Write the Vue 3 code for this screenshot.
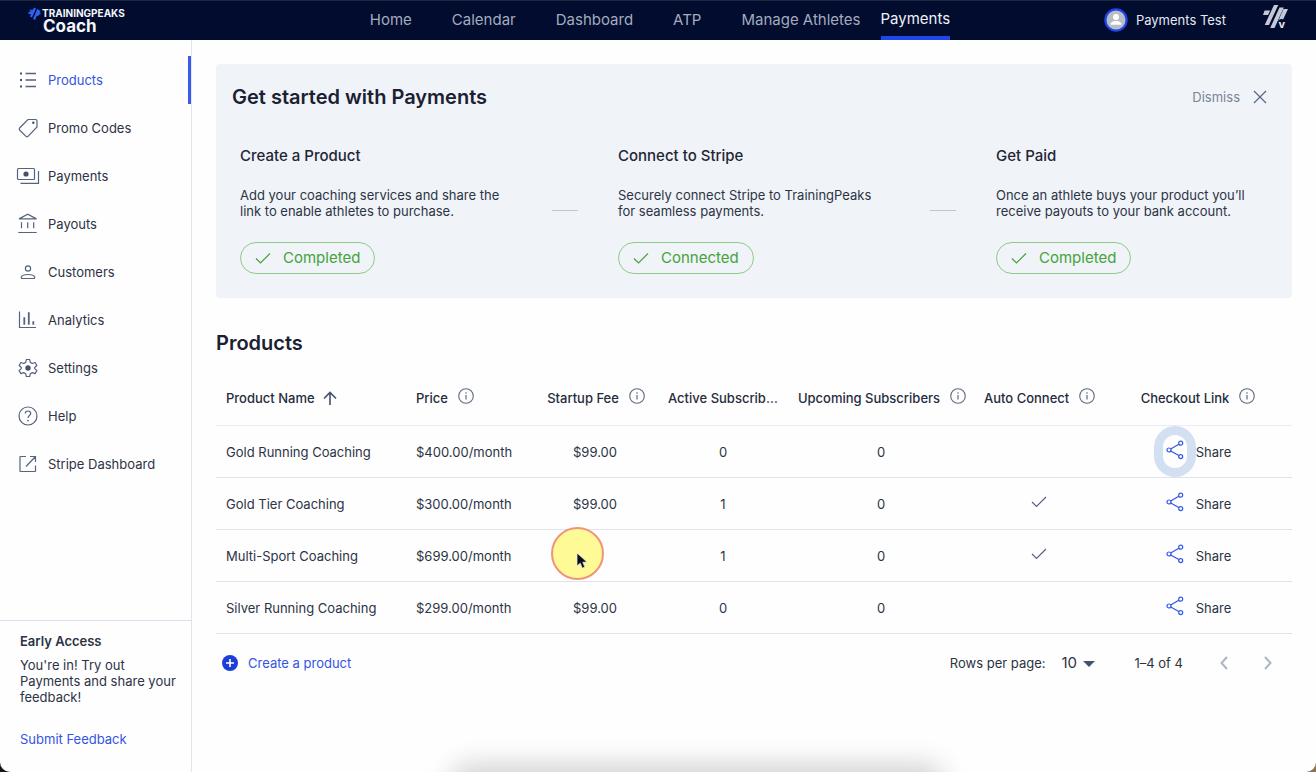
<script setup>
import { ref } from 'vue'

const tabs = ['Home', 'Calendar', 'Dashboard', 'ATP', 'Manage Athletes', 'Payments']
const menu = [
  { id: 'products', label: 'Products' },
  { id: 'promo', label: 'Promo Codes' },
  { id: 'payments', label: 'Payments' },
  { id: 'payouts', label: 'Payouts' },
  { id: 'customers', label: 'Customers' },
  { id: 'analytics', label: 'Analytics' },
  { id: 'settings', label: 'Settings' },
  { id: 'help', label: 'Help' },
  { id: 'stripe', label: 'Stripe Dashboard' },
]
const steps = [
  { title: 'Create a Product', text: 'Add your coaching services and share the link to enable athletes to purchase.', state: 'Completed' },
  { title: 'Connect to Stripe', text: 'Securely connect Stripe to TrainingPeaks for seamless payments.', state: 'Connected' },
  { title: 'Get Paid', text: 'Once an athlete buys your product you’ll receive payouts to your bank account.', state: 'Completed' },
]
const columns = [
  { key: 'name', label: 'Product Name', sort: true },
  { key: 'price', label: 'Price', info: true },
  { key: 'fee', label: 'Startup Fee', info: true },
  { key: 'active', label: 'Active Subscribers' },
  { key: 'upcoming', label: 'Upcoming Subscribers', info: true },
  { key: 'auto', label: 'Auto Connect', info: true },
  { key: 'link', label: 'Checkout Link', info: true },
]
const products = [
  { name: 'Gold Running Coaching', price: '$400.00/month', fee: '$99.00', active: 0, upcoming: 0, auto: false, focused: true },
  { name: 'Gold Tier Coaching', price: '$300.00/month', fee: '$99.00', active: 1, upcoming: 0, auto: true },
  { name: 'Multi-Sport Coaching', price: '$699.00/month', fee: '', active: 1, upcoming: 0, auto: true, pointer: true },
  { name: 'Silver Running Coaching', price: '$299.00/month', fee: '$99.00', active: 0, upcoming: 0, auto: false },
]
const perPage = ref(10)
</script>

<template>
  <div class="window">
    <header class="topbar">
      <a href="#" class="brand">
        <svg class="brand-mark" width="13" height="13" viewBox="0 0 26 26" aria-hidden="true">
          <g stroke="#2f62f0" fill="none">
            <path d="M6 20L14 2M12 25L20.500 5M18.500 17.500L23 7" stroke-width="4.400" />
            <path d="M1 12H9M3.500 7.500H12M17 13H25" stroke-width="3.600" />
          </g>
        </svg>
        <span class="brand-text">
          <span class="brand-name">TRAININGPEAKS</span>
          <span class="brand-sub">Coach</span>
        </span>
      </a>
      <nav class="tabs" aria-label="Main">
        <a v-for="t in tabs" :key="t" href="#" class="tab" :class="{ active: t === 'Payments' }">{{ t }}</a>
      </nav>
      <div class="account">
        <button class="user" type="button">
          <svg width="24" height="24" viewBox="0 0 24 24" aria-hidden="true">
            <circle cx="12" cy="12" r="10.6" fill="#b9bdc4" stroke="#1f45ec" stroke-width="2.2" />
            <circle cx="12" cy="9" r="3" fill="#fff" />
            <path d="M6.5 16.8c0-2.6 2.4-3.8 5.5-3.8s5.500 1.200 5.500 3.800z" fill="#fff" />
          </svg>
          Payments Test
        </button>
        <a href="#" class="virtual" aria-label="Virtual">
          <svg width="26" height="27" viewBox="0 0 26 27" aria-hidden="true">
            <g fill="#c3cad6">
              <path d="M2.600 7.500H8.200L6 12H1zM12 2H16.300L7 22H2.700zM17.500 4.500H21.800L12.500 25H8.200zM21.500 6H26L20.200 18.500H16z" />
            </g>
          </svg>
          <span class="virtual-v">v</span>
        </a>
      </div>
    </header>

    <div class="body">
      <aside class="sidebar">
        <nav class="menu" aria-label="Payments">
          <a v-for="m in menu" :key="m.id" href="#" class="menu-item" :class="{ current: m.id === 'products' }">
            <svg class="menu-icon" width="24" height="24" viewBox="0 0 24 24" aria-hidden="true">
              <template v-if="m.id === 'products'">
                <path d="M9.500 5.500H20M9.500 12H20M9.500 18.500H20" stroke-width="1.500" />
                <path class="solid" d="M4 4.500h2v2H4zM4 11h2v2H4zM4 17.500h2v2H4z" />
              </template>
              <template v-else-if="m.id === 'promo'">
                <path d="M12 3.500H19.500Q21 3.500 21 5V11L12 20.300Q11 21.300 10 20.300L3.600 14Q2.800 13 3.600 12z" />
                <circle class="solid" cx="17.300" cy="6.800" r="1.200" />
              </template>
              <template v-else-if="m.id === 'payments'">
                <rect x="1.500" y="4.500" width="17" height="11" rx="1" />
                <circle class="solid" cx="10" cy="10" r="2.600" />
                <path d="M22.500 7V19.300H4.500" />
              </template>
              <template v-else-if="m.id === 'payouts'">
                <path d="M3 6.900H20.500L11.700 2.300zM5.500 10.300v6M11.700 10.300v6M17.700 10.300v6M2.300 20.500H20.700" />
              </template>
              <template v-else-if="m.id === 'customers'">
                <circle cx="12" cy="8.500" r="2.600" />
                <path d="M6.500 18.500h11Q19 18.500 18.700 17C18 15 14.500 14.500 12 14.500S6 15 5.300 17Q5 18.500 6.500 18.500z" />
              </template>
              <template v-else-if="m.id === 'analytics'">
                <path d="M3.500 3.500V19.500H20" />
                <path class="bold" d="M8.300 9.300v7.400M12.800 4.300v12.400M17.300 13.300v3.400" />
              </template>
              <template v-else-if="m.id === 'settings'">
                <path stroke-linejoin="round" d="M10.300 3.500h3.400l.6 2.900 2 1.100 2.800-1 1.800 3-2.200 2v1.100l2.200 2-1.800 3-2.800-1-2 1.100-.6 2.800h-3.400l-.6-2.800-2-1.100-2.800 1-1.800-3 2.200-2v-1.100l-2.200-2 1.800-3 2.800 1 2-1.100z" />
                <circle class="solid" cx="12" cy="12" r="2.700" />
              </template>
              <template v-else-if="m.id === 'help'">
                <circle cx="12" cy="12" r="9" />
                <path d="M9.300 9.500C9.300 7.700 10.500 7 12 7s2.700.9 2.700 2.500c0 2-2.700 2.200-2.700 4.500" />
                <circle class="solid" cx="12" cy="16.600" r=".8" />
              </template>
              <template v-else>
                <path d="M10 4.500H4.500Q4 4.500 4 5V19Q4 19.500 4.500 19.500H19Q19.500 19.500 19.500 19V13.500M14 4.500H19.500V10M19.500 4.500L10 14.500" />
              </template>
            </svg>
            {{ m.label }}
          </a>
        </nav>
        <section class="early">
          <h2 class="early-title">Early Access</h2>
          <p class="early-text">You're in! Try out Payments and share your feedback!</p>
          <a href="#" class="early-link">Submit Feedback</a>
        </section>
      </aside>

      <main class="content">
        <section class="intro">
          <div class="intro-head">
            <h1 class="heading">Get started with Payments</h1>
            <button class="dismiss" type="button">
              Dismiss
              <svg width="14" height="14" viewBox="0 0 14 14" aria-hidden="true">
                <path d="M1 1L13 13M13 1L1 13" stroke="currentColor" stroke-width="1.300" />
              </svg>
            </button>
          </div>
          <div class="steps">
            <template v-for="(s, i) in steps" :key="s.title">
              <span v-if="i" class="connector"></span>
              <div class="step">
                <h3 class="step-title">{{ s.title }}</h3>
                <p class="step-text">{{ s.text }}</p>
                <span class="state">
                  <svg width="16" height="12" viewBox="0 0 16 12" aria-hidden="true">
                    <path d="M1 6.500L5.500 11L15 1.500" fill="none" stroke="currentColor" stroke-width="1.200" />
                  </svg>
                  {{ s.state }}
                </span>
              </div>
            </template>
          </div>
        </section>

        <h2 class="heading products-heading">Products</h2>
        <table class="grid">
          <colgroup>
            <col v-for="c in columns" :key="c.key" :class="'col-' + c.key" />
          </colgroup>
          <thead>
            <tr>
              <th v-for="c in columns" :key="c.key" scope="col" :class="{ left: c.key === 'name' || c.key === 'price' }">
                <div class="th">
                  <span class="th-label" :class="{ whole: c.info }">{{ c.label }}</span>
                  <button v-if="c.sort" class="icon-button" type="button" aria-label="Sort by product name">
                    <svg width="14" height="14" viewBox="0 0 14 14" aria-hidden="true">
                      <path d="M7 14V1.500M1 7.500L7 1.500L13 7.500" fill="none" stroke="#44526f" stroke-width="1.600" />
                    </svg>
                  </button>
                  <button v-if="c.info" class="icon-button info" type="button" :aria-label="'About ' + c.label">
                    <svg width="16" height="16" viewBox="0 0 16 16" aria-hidden="true">
                      <circle cx="8" cy="8" r="7.300" fill="none" stroke="#5d6a84" stroke-width="1.100" />
                      <path d="M8 7v4.500M8 4.300v1.400" stroke="#5d6a84" stroke-width="1.200" />
                    </svg>
                  </button>
                </div>
              </th>
            </tr>
          </thead>
          <tbody>
            <tr v-for="p in products" :key="p.name">
              <td class="left">{{ p.name }}</td>
              <td class="left">{{ p.price }}</td>
              <td>
                <div class="fee">
                  {{ p.fee }}
                  <span v-if="p.pointer" class="pointer">
                    <svg width="12" height="18" viewBox="0 0 12 18" aria-hidden="true">
                      <path d="M1 1V14L4.200 11.200L6.300 16.200L8.900 15L6.800 10.300L11 10z" fill="#0b0f1c" stroke="#e8e8e0" stroke-width=".8" />
                    </svg>
                  </span>
                </div>
              </td>
              <td>{{ p.active }}</td>
              <td>{{ p.upcoming }}</td>
              <td>
                <svg v-if="p.auto" class="tick" width="16" height="12" viewBox="0 0 16 12" role="img" aria-label="Yes">
                  <path d="M1 6L5.500 10.500L15 1" fill="none" stroke="#56637d" stroke-width="1.200" />
                </svg>
              </td>
              <td>
                <div class="share">
                  <button class="share-button" :class="{ focused: p.focused }" type="button" :aria-label="'Share ' + p.name">
                    <svg width="18" height="20" viewBox="0 0 18 20" aria-hidden="true">
                      <g fill="none" stroke="#3158e6" stroke-width="1.200">
                        <path d="M4.700 9L12.800 4.200M4.700 11L12.800 15.600" />
                        <circle cx="3" cy="10" r="2" />
                        <circle cx="14.700" cy="3.200" r="2" />
                        <circle cx="14.700" cy="16.600" r="2" />
                      </g>
                    </svg>
                  </button>
                  <span class="share-label">Share</span>
                </div>
              </td>
            </tr>
          </tbody>
        </table>

        <div class="grid-footer">
          <button class="create" type="button">
            <svg width="16" height="16" viewBox="0 0 16 16" aria-hidden="true">
              <circle cx="8" cy="8" r="8" fill="#1c3fd8" />
              <path d="M8 4v8M4 8h8" stroke="#fff" stroke-width="1.600" />
            </svg>
            Create a product
          </button>
          <div class="pager">
            <label for="per-page">Rows per page:</label>
            <span class="per-page">
              <select id="per-page" v-model="perPage">
                <option :value="10">10</option>
                <option :value="25">25</option>
                <option :value="50">50</option>
              </select>
              <svg class="caret" width="12" height="6" viewBox="0 0 12 6" aria-hidden="true"><path d="M0 0h12L6 6z" fill="#44526f" /></svg>
            </span>
            <span class="range">1–4 of 4</span>
            <button class="page" type="button" aria-label="Previous page">
              <svg width="8" height="14" viewBox="0 0 8 14" aria-hidden="true"><path d="M7 1L1.500 7L7 13" /></svg>
            </button>
            <button class="page" type="button" aria-label="Next page">
              <svg width="8" height="14" viewBox="0 0 8 14" aria-hidden="true"><path d="M1 1L6.500 7L1 13" /></svg>
            </button>
          </div>
        </div>
      </main>
    </div>
    <div class="dock-shadow"></div>
  </div>
</template>

<style>
body {
  margin: 0;
  background: linear-gradient(90deg, #15171b 50%, #8a7358 50%);
}
</style>

<style scoped>
.window {
  position: relative;
  display: flex;
  flex-direction: column;
  min-height: 100vh;
  overflow: hidden;
  box-sizing: border-box;
  border-radius: 0 0 10px 10px;
  background: #fefefe;
  color: #2c3344;
  font-family: Inter, "Liberation Sans", sans-serif;
  font-size: 13px;
  line-height: 16px;
}
a { color: inherit; text-decoration: none; }
button {
  padding: 0;
  border: 0;
  background: none;
  color: inherit;
  font: inherit;
  cursor: pointer;
}
h1, h2, h3, p { margin: 0; }
svg { display: block; flex: none; }

.topbar {
  display: grid;
  grid-template-columns: 1fr auto 1fr;
  height: 40px;
  padding: 0 24px 0 28px;
  box-sizing: border-box;
  border-top: 1px solid #1d2742;
  background: #010c2f;
}
.brand {
  display: flex;
  gap: 1px;
  padding-top: 6px;
  color: #f4f6fa;
}
.brand-text { display: flex; flex-direction: column; }
.brand-name {
  font-size: 10px;
  font-weight: 700;
  line-height: 13px;
}
.brand-sub {
  padding-left: 1px;
  font-size: 17px;
  font-weight: 700;
  line-height: 13px;
}
.tabs { display: flex; gap: 40px; }
.tab {
  color: #a3abbd;
  font-size: 15px;
  line-height: 38px;
}
.tab.active {
  box-sizing: border-box;
  height: 39px;
  margin-left: -20px;
  border-bottom: 4px solid #1f45ec;
  color: #eef1f7;
  line-height: 35px;
}
.account {
  display: flex;
  justify-content: flex-end;
  align-items: center;
  gap: 36px;
  padding: 0 4px 2px 0;
}
.user {
  display: flex;
  align-items: center;
  gap: 8px;
  color: #e6e9f0;
}
.virtual { position: relative; align-self: flex-start; padding-top: 2px; }
.virtual-v {
  position: absolute;
  right: 3px;
  bottom: 0;
  color: #e6e9f0;
  font-size: 11px;
  font-weight: 700;
  line-height: 11px;
  background: #010c2f;
  border-radius: 4px;
}

.body { display: flex; flex: 1; }
.sidebar {
  display: flex;
  flex: none;
  flex-direction: column;
  justify-content: space-between;
  box-sizing: border-box;
  width: 192px;
  padding-top: 16px;
  border-right: 1px solid #e1e5ef;
}
.menu-item {
  display: flex;
  align-items: center;
  gap: 8px;
  height: 48px;
  padding-left: 16px;
}
.menu-item.current {
  border-right: 3px solid #3a5be4;
  color: #3355e0;
}
.menu-icon {
  fill: none;
  stroke: #56637e;
  stroke-width: 1.2;
}
.menu-icon .solid { fill: #44526f; stroke: none; }
.menu-icon .bold { stroke-width: 1.8; }
.early {
  display: flex;
  flex-direction: column;
  padding: 12px 12px 25px 20px;
  border-top: 1px solid #d9dfed;
}
.early-title { font-size: 13px; line-height: 16px; font-weight: 600; }
.early-text { margin-top: 8px; }
.early-link { margin-top: 26px; color: #3355e0; }

.content {
  flex: 1;
  min-width: 0;
  padding: 24px;
}
.intro {
  padding: 21px 16px 24px;
  border-radius: 4px;
  background: #f0f3f8;
}
.intro-head {
  display: flex;
  align-items: center;
  justify-content: space-between;
}
.heading {
  color: #1b2132;
  font-size: 20px;
  font-weight: 600;
  line-height: 24px;
}
.dismiss {
  display: flex;
  align-items: center;
  gap: 13px;
  padding-right: 9px;
  color: #7a8497;
}
.dismiss svg { color: #5d6a84; }
.steps {
  display: flex;
  padding: 37px 0 0 8px;
}
.step {
  flex: 0 1 280px;
  box-sizing: border-box;
  padding-right: 16px;
}
.connector {
  flex: none;
  width: 26px;
  margin: 64px 40px 0 32px;
  height: 1px;
  background: #c0c5cf;
}
.step-title {
  color: #1f2637;
  font-size: 15px;
  font-weight: 500;
  line-height: 20px;
}
.step-text { margin: 21px 0 23px; }
.state {
  display: inline-flex;
  align-items: center;
  gap: 12px;
  height: 30px;
  padding: 0 14px;
  border: 1px solid #8fcb88;
  border-radius: 16px;
  color: #45a33b;
  font-size: 15px;
  line-height: 20px;
  vertical-align: top;
}

.products-heading { margin-top: 33px; }
.grid {
  width: 100%;
  margin-top: 15px;
  border-collapse: separate;
  border-spacing: 0;
  table-layout: fixed;
}
.col-price { width: 125px; }
.col-fee, .col-active { width: 128px; }
.col-upcoming { width: 188px; }
.col-auto { width: 127px; }
.col-link { width: 190px; }
th, td {
  box-sizing: border-box;
  height: 52px;
  padding: 0 10px;
  border-bottom: 1px solid #dfe3ec;
  text-align: center;
  white-space: nowrap;
}
th {
  height: 56px;
  padding: 0 7px 0 9px;
  border-bottom-color: #e9ecf3;
  color: #252c3d;
  font-weight: 500;
}
.left {
  padding-left: 10px;
  text-align: left;
}
.th {
  display: flex;
  align-items: center;
  justify-content: safe center;
  gap: 8px;
}
.left .th { justify-content: flex-start; }
.th-label { overflow: hidden; text-overflow: ellipsis; }
.th-label.whole { flex: none; }
.icon-button { flex: none; }
.info { margin: 0 0 3px 2px; }
.fee { position: relative; min-height: 16px; }
.pointer {
  position: absolute;
  top: -21px;
  left: calc(50% - 44px);
  display: flex;
  box-sizing: border-box;
  width: 53px;
  height: 53px;
  padding: 23px 0 0 23px;
  border: 2px solid #f0937c;
  border-radius: 50%;
  background: #fefa95;
}
.tick { margin: 0 auto 4px; }
.share {
  display: flex;
  align-items: center;
  justify-content: center;
  gap: 9px;
}
.share-button {
  width: 24px;
  height: 33px;
  padding: 0 3px 4px;
  border-radius: 12px;
}
.share-button.focused { box-shadow: 0 0 0 9px #d3e0f1; }
.share-label { position: relative; }

.grid-footer {
  display: flex;
  align-items: center;
  justify-content: space-between;
  height: 58px;
}
.create {
  display: flex;
  align-items: center;
  gap: 10px;
  padding-left: 6px;
  color: #3355e0;
}
.pager {
  display: flex;
  align-items: center;
  padding-right: 12px;
}
.per-page { position: relative; margin-left: 16px; }
.per-page select {
  appearance: none;
  width: 34px;
  padding: 0;
  border: 0;
  background: none;
  color: inherit;
  font: 15px/20px Inter, sans-serif;
}
.caret {
  position: absolute;
  top: 8px;
  right: 0;
  pointer-events: none;
}
.range { margin: 0 29px 0 39px; }
.page {
  display: flex;
  justify-content: center;
  width: 24px;
}
.page + .page { margin-left: 20px; }
.page path { fill: none; stroke: #adb4c4; stroke-width: 2; }

.dock-shadow {
  position: absolute;
  right: 29%;
  bottom: -20px;
  left: 35%;
  height: 18px;
  border-radius: 10px;
  box-shadow: 0 0 26px 10px rgba(40, 40, 50, 0.2);
}
</style>
